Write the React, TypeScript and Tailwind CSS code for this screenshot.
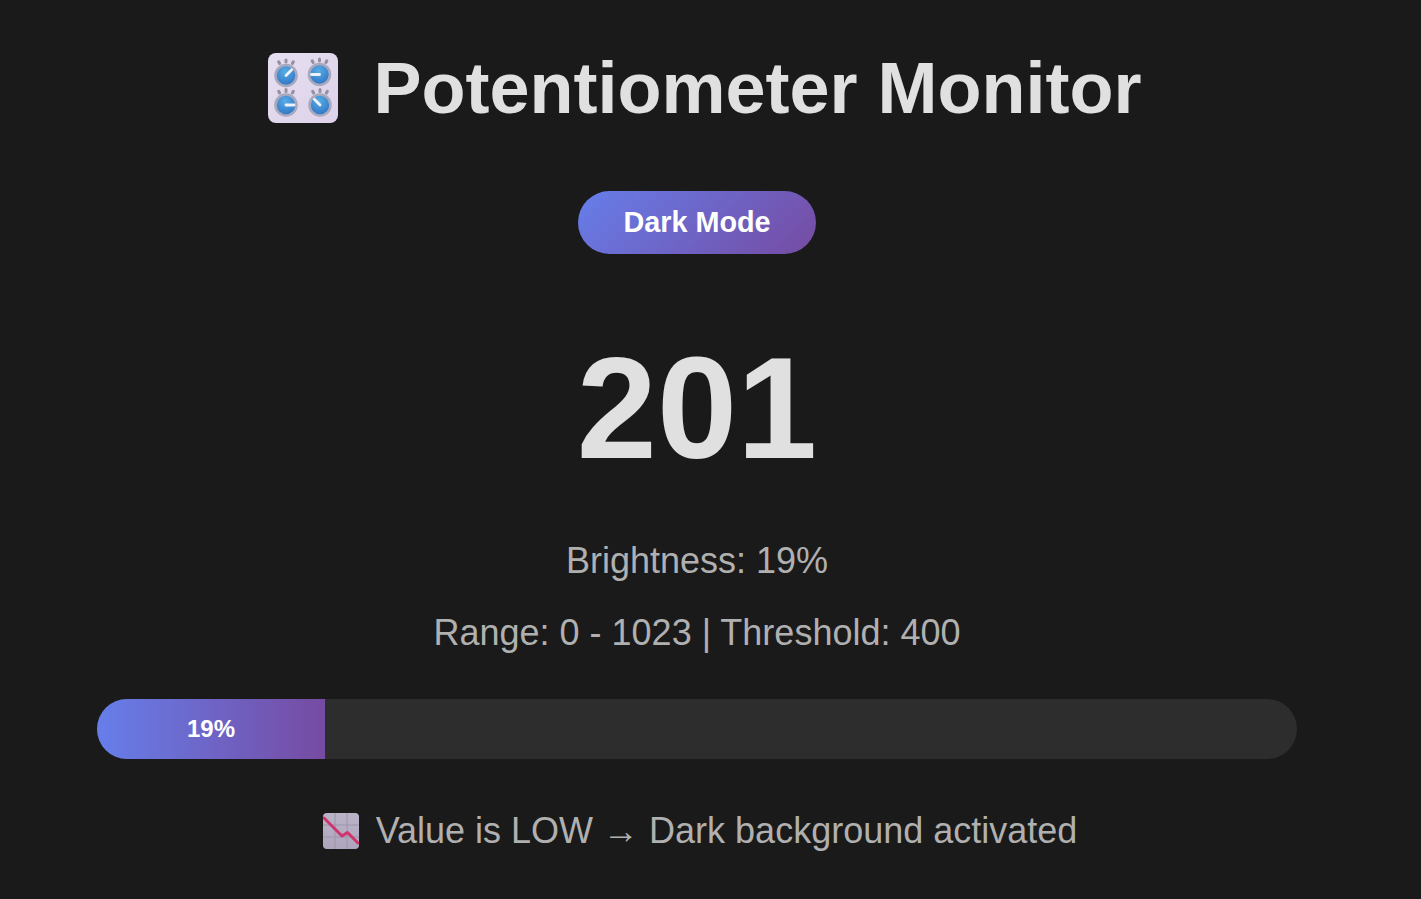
import React from "react";

function Knob({ cx, cy, angle, len = 8 }: { cx: number; cy: number; angle: number; len?: number }) {
  const a = (angle * Math.PI) / 180;
  const x2 = cx + Math.cos(a) * len;
  const y2 = cy + Math.sin(a) * len;
  const ticks = [-118, -90, -62].map((t) => {
    const b = (t * Math.PI) / 180;
    const r1 = 13.6;
    const r2 = 15.6;
    return (
      <line
        key={t}
        x1={cx + Math.cos(b) * r1}
        y1={cy + Math.sin(b) * r1}
        x2={cx + Math.cos(b) * r2}
        y2={cy + Math.sin(b) * r2}
        stroke="#958f9f"
        strokeWidth="3"
        strokeLinecap="round"
      />
    );
  });
  return (
    <g>
      {ticks}
      <circle cx={cx} cy={cy} r={11.8} fill="#a8a9bf" />
      <circle cx={cx} cy={cy} r={9.2} fill="url(#knobBlue)" />
      <line x1={cx} y1={cy} x2={x2} y2={y2} stroke="#eef2fb" strokeWidth="2.8" strokeLinecap="round" />
    </g>
  );
}

function ControlKnobs() {
  return (
    <svg width="70" height="70" viewBox="0 0 70 70" aria-hidden="true">
      <defs>
        <linearGradient id="panel" x1="0" y1="0" x2="1" y2="1">
          <stop offset="0" stopColor="#e6dff0" />
          <stop offset="1" stopColor="#ded2ea" />
        </linearGradient>
        <radialGradient id="knobBlue" cx="0.45" cy="0.3" r="0.8">
          <stop offset="0" stopColor="#58ace6" />
          <stop offset="1" stopColor="#2d72c2" />
        </radialGradient>
      </defs>
      <rect width="70" height="70" rx="8" fill="url(#panel)" />
      <Knob cx={18} cy={22.5} angle={-45} />
      <Knob cx={51.5} cy={21.5} angle={180} />
      <Knob cx={18} cy={52} angle={0} />
      <Knob cx={52} cy={52} angle={-135} />
    </svg>
  );
}

function ChartDown() {
  return (
    <svg width="36" height="36" viewBox="0 0 36 36" aria-hidden="true">
      <defs>
        <linearGradient id="chartBg" x1="0" y1="0" x2="0" y2="1">
          <stop offset="0" stopColor="#bbb3c8" />
          <stop offset="1" stopColor="#aea6bc" />
        </linearGradient>
      </defs>
      <rect width="36" height="36" rx="4" fill="url(#chartBg)" />
      <path d="M12 0V36M24 0V36M0 12H36M0 24H36" stroke="#9c95aa" strokeWidth="1" />
      <path d="M1 5L19 23L24.5 19.5L35 30" fill="none" stroke="#d1346d" strokeWidth="3" strokeLinecap="round" strokeLinejoin="round" />
    </svg>
  );
}

export default function App() {
  return (
    <div className="min-h-[899px] overflow-hidden bg-[#1a1a1a] font-['Liberation_Sans',Arial,sans-serif]">
      <div className="ml-[97px] flex w-[1200px] flex-col items-center">
        <h1 className="mt-[47px] flex items-center whitespace-nowrap text-[72px] font-bold leading-[83px] text-[#e0e0e0]">
          <span className="mb-[1px] flex w-[101px] justify-center"><ControlKnobs /></span>
          <span className="ml-[20px]">Potentiometer Monitor</span>
        </h1>
        <button className="mt-[61px] h-[63px] w-[238px] rounded-[50px] bg-[linear-gradient(135deg,#667eea_0%,#764ba2_100%)] text-[28.8px] font-bold text-white">
          Dark Mode
        </button>
        <div className="mt-[72px] text-[144px] font-bold leading-[165px] text-[#e0e0e0]">201</div>
        <p className="mt-[50px] text-[36px] leading-[40px] text-[#b0b0b0]">Brightness: 19%</p>
        <p className="mt-[32px] text-[36px] leading-[40px] text-[#b0b0b0]">Range: 0 - 1023 | Threshold: 400</p>
        <div className="mt-[46px] h-[60px] w-full overflow-hidden rounded-[30px] bg-[#2d2d2d]">
          <div className="flex h-full w-[19%] items-center justify-center bg-[linear-gradient(90deg,#667eea_0%,#764ba2_100%)] text-[24px] font-bold text-white">
            19%
          </div>
        </div>
        <p className="mt-[52px] flex items-center whitespace-nowrap text-[36px] leading-[40px] text-[#b0b0b0]">
          <span className="flex w-[49px] justify-center"><ChartDown /></span>
          <span className="ml-[10px]">Value is LOW → Dark background activated</span>
        </p>
      </div>
    </div>
  );
}
